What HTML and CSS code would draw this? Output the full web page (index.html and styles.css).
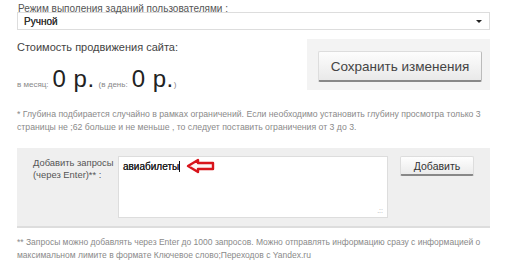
FILE: index.html
```html
<!DOCTYPE html>
<html lang="ru">
<head>
    <meta charset="UTF-8">
    <title>Настройки продвижения</title>
    <link rel="stylesheet" href="styles.css">
</head>
<body>
<div class="page">
    <div class="pole-label">Режим выполения заданий пользователями :</div>
    <div class="vybor">
        <span>Ручной</span>
        <span class="strelka"></span>
    </div>

    <div class="stoimost">
        <div class="stoimost-info">
            <div class="stoimost-title">Стоимость продвижения сайта:</div>
            <div class="cena">
                <span class="melko">в месяц:</span>
                <span class="krupno">0 р.</span>
                <span class="melko">(в день:</span>
                <span class="krupno">0 р.</span>
                <span class="melko">)</span>
            </div>
        </div>
        <div class="sohranit-box">
            <button class="knopka-big">Сохранить изменения</button>
        </div>
    </div>

    <p class="primechanie">* Глубина подбирается случайно в рамках ограничений. Если необходимо установить глубину просмотра только 3 страницы не ;62 больше и не меньше , то следует поставить ограничения от 3 до 3.</p>

    <div class="panel">
        <div class="panel-label">Добавить запросы<br>(через Enter)** :</div>
        <div class="pole-zaprosy">
            <div class="zaprosy">авиабилеты<span class="kursor"></span></div>
            <span class="ugol">.::</span>
            <svg class="strelka-red" width="30" height="16" viewBox="0 0 30 16">
                <path d="M2 8 L12 2 L12 5 L27 5 L27 11 L12 11 L12 14 Z" fill="#fdf4f4" stroke="#d8141b" stroke-width="2.4" stroke-linejoin="round"/>
            </svg>
        </div>
        <button class="knopka">Добавить</button>
    </div>

    <p class="primechanie niz">** Запросы можно добавлять через Enter до 1000 запросов. Можно отправлять информацию сразу с информацией о максимальном лимите в формате Ключевое слово;Переходов с Yandex.ru</p>
</div>
</body>
</html>
```

FILE: styles.css
```css
body {
    margin: 0;
    background: #fff;
    font-family: "Liberation Sans", Arial, sans-serif;
    color: #444;
}
.page {
    width: 473px;
    padding: 3px 0 0 17px;
}
.pole-label {
    font-size: 10px;
    line-height: 12px;
    color: #555;
    margin-left: 1px;
}
.vybor {
    display: flex;
    justify-content: space-between;
    align-items: center;
    height: 16px;
    margin-top: -3px;
    border: 1px solid #ddd;
    padding: 0 7px 0 6px;
    font-size: 10px;
    color: #333;
}
.vybor span:first-child {
    text-shadow: 0 0 0.4px #333;
}
.strelka {
    width: 0;
    height: 0;
    border-left: 3px solid transparent;
    border-right: 3px solid transparent;
    border-top: 3px solid #222;
}
.stoimost {
    display: flex;
    justify-content: space-between;
    margin-top: 9px;
}
.stoimost-info {
    padding-top: 1px;
}
.stoimost-title {
    font-size: 11px;
    line-height: 14px;
    color: #444;
}
.cena {
    margin-top: 11px;
    display: flex;
    align-items: baseline;
    gap: 4px;
    white-space: pre;
}
.melko {
    font-size: 8px;
    color: #888;
}
.krupno {
    font-size: 24px;
    letter-spacing: 0.5px;
    color: #222;
    line-height: 28px;
}
.melko:last-child {
    margin-left: -4px;
}
.sohranit-box {
    background: #f3f3f3;
    width: 172px;
    height: 39px;
    padding: 12px 0 0 11px;
}
.knopka-big {
    width: 164px;
    height: 31px;
    font-family: "Liberation Sans", Arial, sans-serif;
    font-size: 13.5px;
    color: #444;
    background: linear-gradient(#fdfdfd, #e9e9e9);
    border: 1px solid #ddd;
    border-bottom: 2px solid #888;
    border-right: 1px solid #bbb;
    border-radius: 2px;
    padding: 0;
}
.primechanie {
    margin: 15px 0 0;
    font-size: 8.7px;
    line-height: 13px;
    color: #8a8a8a;
}
.panel {
    display: flex;
    align-items: flex-start;
    margin-top: 14px;
    height: 70px;
    padding: 8px 0 0 16px;
    background: #efefef;
    border-bottom: 2px solid #ddd;
}
.panel-label {
    flex: 0 0 85px;
    white-space: nowrap;
    padding-top: 1px;
    font-size: 9.4px;
    line-height: 12px;
    color: #555;
}
.pole-zaprosy {
    position: relative;
    width: 268px;
    height: 60px;
    background: #fff;
    border: 1px solid #ddd;
}
.zaprosy {
    padding: 4px 0 0 4px;
    font-size: 10px;
    color: #222;
    text-shadow: 0 0 0.5px #222;
}
.kursor {
    display: inline-block;
    width: 1px;
    height: 11px;
    background: #111;
    vertical-align: -2px;
}
.ugol {
    position: absolute;
    right: 4px;
    bottom: 3px;
    font-size: 7px;
    line-height: 7px;
    color: #aaa;
}
.strelka-red {
    position: absolute;
    left: 67px;
    top: 1px;
}
.knopka {
    margin-left: 12px;
    width: 74px;
    height: 20px;
    font-family: "Liberation Sans", Arial, sans-serif;
    font-size: 10.5px;
    color: #333;
    background: linear-gradient(#fefefe, #ebebeb);
    border: 1px solid #ddd;
    border-bottom: 2px solid #888;
    border-radius: 2px;
    padding: 0;
}
.niz {
    margin-top: 8px;
    font-size: 8.5px;
}
```
